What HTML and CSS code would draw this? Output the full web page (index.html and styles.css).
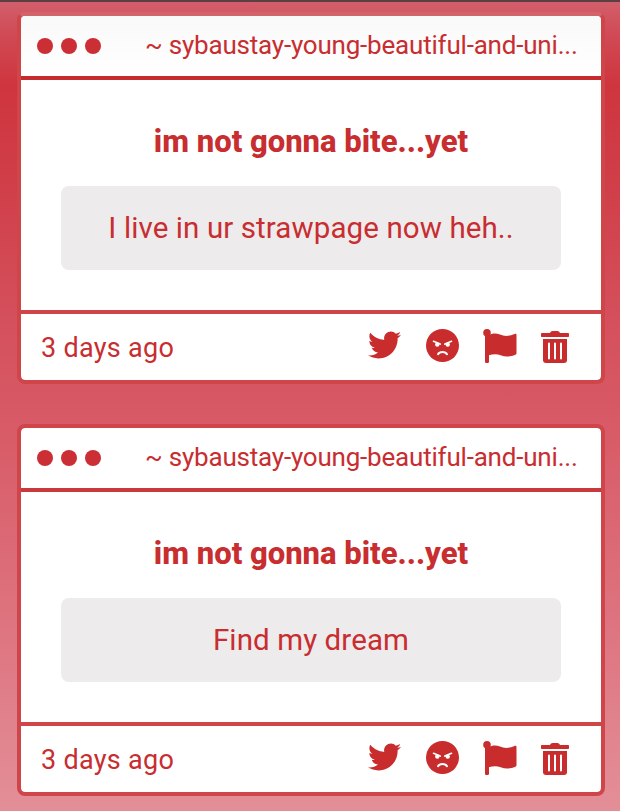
FILE: index.html
```html
<!DOCTYPE html>
<html lang="en">
  <head>
    <meta charset="UTF-8" />
    <meta name="viewport" content="width=device-width, initial-scale=1.0" />
    <title>Inbox</title>
    <link rel="stylesheet" href="styles.css">
  </head>
  <body>
    <!-- icons shared by every card -->
    <svg class="sprite" width="0" height="0">
      <symbol id="twitter" viewBox="0 48 512 416">
        <path d="M459.37 151.716c.325 4.548.325 9.097.325 13.645 0 138.72-105.583 298.558-298.558 298.558-59.452 0-114.68-17.219-161.137-47.106 8.447.974 16.568 1.299 25.34 1.299 49.055 0 94.213-16.568 130.274-44.832-46.132-.975-84.792-31.188-98.112-72.772 6.498.974 12.995 1.624 19.818 1.624 9.421 0 18.843-1.3 27.614-3.573-48.081-9.747-84.143-51.98-84.143-102.985v-1.299c13.969 7.797 30.214 12.67 47.431 13.319-28.264-18.843-46.781-51.005-46.781-87.391 0-19.492 5.197-37.36 14.294-52.954 51.655 63.675 129.3 105.258 216.365 109.807-1.624-7.797-2.599-15.918-2.599-24.04 0-57.828 46.782-104.934 104.934-104.934 30.213 0 57.502 12.67 76.67 33.137 23.715-4.548 46.456-13.32 66.599-25.34-7.798 24.366-24.366 44.833-46.132 57.827 21.117-2.273 41.584-8.122 60.426-16.243-14.292 20.791-32.161 39.308-52.628 54.253z" />
      </symbol>
      <symbol id="angry" viewBox="0 0 33 33">
        <circle cx="16.5" cy="16.5" r="16.5" />
        <g fill="none" stroke="#fff" stroke-linecap="round">
          <path d="M7.5 12.3l6.7 2.8M25.5 12.3l-6.7 2.8" stroke-width="1.6" />
          <path d="M12 25.2c1.6-3 7.4-3 9 0" stroke-width="2" />
        </g>
        <circle cx="11.3" cy="15.6" r="2.2" fill="#fff" />
        <circle cx="21.7" cy="15.6" r="2.2" fill="#fff" />
      </symbol>
      <symbol id="flag" viewBox="0 0 34 34">
        <circle cx="4" cy="3.8" r="3.8" />
        <path d="M2 4h4v28.2a2 2 0 0 1-4 0z" />
        <path d="M5.5 6.2c3.5-1.8 7.5-2.2 11.5-.6 4.5 1.9 9 1.7 14.5-.7 1.2-.5 2 0 2 1.1v18c0 .9-.3 1.4-1.1 1.8-5.4 2.3-10 2.3-14.8.5-4-1.5-7.6-1-12.1 0z" />
      </symbol>
      <symbol id="trash" viewBox="0 0 28 32">
        <path d="M1 2h8c.4-1.3 1.4-2 2.7-2h4.6c1.3 0 2.3.7 2.7 2h8c.6 0 1 .4 1 1v2c0 .6-.4 1-1 1H1c-.6 0-1-.4-1-1V3c0-.6.4-1 1-1z" />
        <path d="M2 8h24v21a3 3 0 0 1-3 3H5a3 3 0 0 1-3-3z" />
        <path d="M8 12.5v15M14 12.5v15M20 12.5v15" stroke="#fff" stroke-width="2" stroke-linecap="round" />
      </symbol>
    </svg>

    <div class="feed">
      <div class="card faded">
        <div class="card-header">
          <div class="dots"><span></span><span></span><span></span></div>
          <div class="page-name">~ sybaustay-young-beautiful-and-uni...</div>
        </div>
        <div class="card-body">
          <h2>im not gonna bite...yet</h2>
          <div class="message">I live in ur strawpage now heh..</div>
        </div>
        <div class="card-footer">
          <span class="time">3 days ago</span>
          <div class="actions">
            <svg class="twitter"><use href="#twitter" /></svg>
            <svg class="angry"><use href="#angry" /></svg>
            <svg class="flag"><use href="#flag" /></svg>
            <svg class="trash"><use href="#trash" /></svg>
          </div>
        </div>
      </div>

      <div class="card">
        <div class="card-header">
          <div class="dots"><span></span><span></span><span></span></div>
          <div class="page-name">~ sybaustay-young-beautiful-and-uni...</div>
        </div>
        <div class="card-body">
          <h2>im not gonna bite...yet</h2>
          <div class="message">Find my dream</div>
        </div>
        <div class="card-footer">
          <span class="time">3 days ago</span>
          <div class="actions">
            <svg class="twitter"><use href="#twitter" /></svg>
            <svg class="angry"><use href="#angry" /></svg>
            <svg class="flag"><use href="#flag" /></svg>
            <svg class="trash"><use href="#trash" /></svg>
          </div>
        </div>
      </div>
    </div>
  </body>
</html>
```
FILE: styles.css
```css
* {
  box-sizing: border-box;
}
body {
  margin: 0;
  height: 811px;
  overflow: hidden;
  border-top: 2px solid #5a4045;
  font-family: Roboto, sans-serif;
  color: #c82d30;
  background: linear-gradient(#d2606c 0, #d04a55 35px, #cf353e 85px, #d03e48 180px, #d4505c 320px, #d85c68 440px, #de7681 640px, #e38f98 811px);
}
.sprite {
  display: block;
}
.feed {
  display: flex;
  flex-direction: column;
  gap: 40px;
  padding: 10px 15px 0 17px;
}
.card {
  height: 372px;
  display: flex;
  flex-direction: column;
  border: 4px solid #cf4549;
  border-radius: 8px;
  background-color: white;
  background-clip: padding-box;
}
.card-header {
  height: 64px;
  display: flex;
  align-items: center;
  padding: 0 16px;
  border-bottom: 4px solid #c9393c;
}
.faded {
  border-top-color: #d2636a;
}
.faded .card-header {
  border-bottom-color: #c62c2d;
  border-radius: 4px 4px 0 0;
  background: linear-gradient(#f9f9f9, #fff);
}
.dots {
  display: flex;
  gap: 8px;
}
.dots span {
  width: 16px;
  height: 16px;
  border-radius: 50%;
  background-color: #cb2e34;
}
.page-name {
  margin-left: 44px;
  padding-bottom: 3px;
  font-size: 26px;
  letter-spacing: -0.2px;
  white-space: nowrap;
}
.card-body {
  height: 230px;
  padding: 42px 40px 0;
  text-align: center;
}
h2 {
  margin: 0 0 24px;
  font-size: 31px;
  line-height: 40px;
  font-weight: 800;
}
.message {
  height: 84px;
  line-height: 84px;
  font-size: 29.5px;
  letter-spacing: 0.1px;
  border-radius: 8px;
  background-color: #edebec;
}
.card-footer {
  height: 70px;
  display: flex;
  justify-content: space-between;
  align-items: center;
  padding: 0 32px 0 20px;
  border-top: 4px solid #cf4549;
}
.time {
  padding-top: 1px;
  font-size: 27px;
  letter-spacing: 0.3px;
}
.actions {
  display: flex;
  align-items: center;
  gap: 24px;
}
.actions svg {
  display: block;
  fill: #c92c2c;
}
.twitter {
  width: 33px;
  height: 28px;
  margin: 0 1px 4px 0;
}
.angry {
  width: 33px;
  height: 33px;
  margin-bottom: 3px;
}
.flag {
  width: 34px;
  height: 34px;
  margin-bottom: 3px;
}
.trash {
  width: 28px;
  height: 32px;
}
```
